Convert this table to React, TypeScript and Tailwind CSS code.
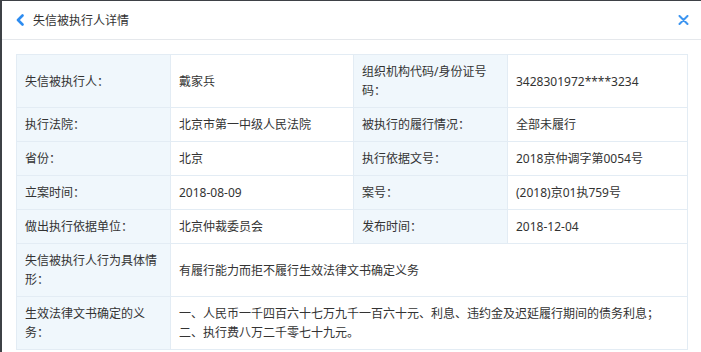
import React from "react";

const L = "bg-[#f0f7fc] border border-[#e3ecf4] px-2 py-[7px] align-middle text-left font-normal";
const V = "bg-white border border-[#e3ecf4] px-2 py-[7px] align-middle";

export default function App() {
  const rows: [string, string, string, string][] = [
    ["失信被执行人：", "戴家兵", "组织机构代码/身份证号码：", "3428301972****3234"],
    ["执行法院：", "北京市第一中级人民法院", "被执行的履行情况：", "全部未履行"],
    ["省份：", "北京", "执行依据文号：", "2018京仲调字第0054号"],
    ["立案时间：", "2018-08-09", "案号：", "(2018)京01执759号"],
    ["做出执行依据单位：", "北京仲裁委员会", "发布时间：", "2018-12-04"],
  ];
  return (
    <div className="w-[701px] h-[352px] bg-[#3e4146] pl-[2px] pt-[1px] overflow-hidden font-['Noto_Sans','Noto_Sans_CJK_SC',sans-serif] text-[12px] text-[#333]">
      <div className="bg-white h-full">
        <div className="h-[39px] border-b border-[#e5e8ec] flex items-center pl-[13px] pr-[12px]">
          <svg width="10" height="12" viewBox="0 0 10 12" className="mr-[8px]">
            <path d="M7.5 1.5 L3 6 L7.5 10.5" fill="none" stroke="#2d8cf0" strokeWidth="2.6" strokeLinecap="round" strokeLinejoin="round" />
          </svg>
          <span className="text-[12px] leading-[19px] text-[#333]">失信被执行人详情</span>
          <div className="flex-1" />
          <svg width="11" height="10" viewBox="0 0 11 10">
            <path d="M1.5 1 L9.5 9 M9.5 1 L1.5 9" fill="none" stroke="#3d95f0" strokeWidth="2" strokeLinecap="round" />
          </svg>
        </div>
        <div className="px-[14px] pt-[14px]">
          <table className="w-[671px] table-fixed border-collapse leading-[19px]">
            <colgroup>
              <col className="w-[154px]" />
              <col className="w-[183px]" />
              <col className="w-[154px]" />
              <col className="w-[180px]" />
            </colgroup>
            <tbody>
              {rows.map((r, i) => (
                <tr key={i}>
                  <td className={L}>{r[0]}</td>
                  <td className={V}>{r[1]}</td>
                  <td className={L}>{r[2]}</td>
                  <td className={V}>{r[3]}</td>
                </tr>
              ))}
              <tr>
                <td className={L}>失信被执行人行为具体情形：</td>
                <td className={V} colSpan={3}>有履行能力而拒不履行生效法律文书确定义务</td>
              </tr>
              <tr>
                <td className={L}>生效法律文书确定的义务：</td>
                <td className={V} colSpan={3}>
                  一、人民币一千四百六十七万九千一百六十元、利息、违约金及迟延履行期间的债务利息；
                  <br />
                  二、执行费八万二千零七十九元。
                </td>
              </tr>
            </tbody>
          </table>
        </div>
      </div>
    </div>
  );
}
